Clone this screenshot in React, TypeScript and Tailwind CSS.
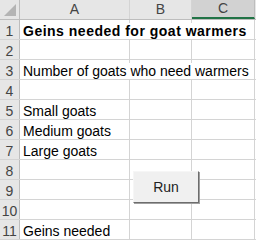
const rows: { n: number; text?: string; bold?: boolean }[] = [
  { n: 1, text: 'Geins needed for goat warmers', bold: true },
  { n: 2 },
  { n: 3, text: 'Number of goats who need warmers' },
  { n: 4 },
  { n: 5, text: 'Small goats' },
  { n: 6, text: 'Medium goats' },
  { n: 7, text: 'Large goats' },
  { n: 8 },
  { n: 9 },
  { n: 10 },
  { n: 11, text: 'Geins needed' },
];

function Corner() {
  return (
    <div className="relative h-full w-[20px] shrink-0 border-r border-[#bdbdbd] bg-[#e6e6e6]">
      <svg className="absolute bottom-[3px] right-[3px]" width="12" height="12" viewBox="0 0 12 12">
        <polygon points="12,0 12,12 0,12" fill="#b4b4b4" />
      </svg>
    </div>
  );
}

export default function App() {
  return (
    <div
      className="relative h-[242px] w-[256px] overflow-hidden bg-white text-[14px] text-black"
      style={{ fontFamily: '"Liberation Sans", Arial, sans-serif' }}
    >
      {/* column headers */}
      <div className="flex h-[20px] border-b border-[#bdbdbd] text-[#444]">
        <Corner />
        <div className="flex w-[110px] shrink-0 items-center justify-center border-r border-[#d4d4d4] bg-[#e6e6e6]">A</div>
        <div className="flex w-[62px] shrink-0 items-center justify-center border-r border-[#d4d4d4] bg-[#e6e6e6]">B</div>
        <div className="flex w-[63px] shrink-0 items-center justify-center border-r border-[#bdbdbd] border-b-2 border-b-[#217346] bg-[#d2d2d2]">C</div>
        <div className="flex-1 bg-[#e6e6e6]" />
      </div>

      {rows.map((r) => (
        <div key={r.n} className="relative flex h-[20px] border-b border-[#d4d4d4]">
          <div className="flex w-[20px] shrink-0 items-end justify-center border-r border-[#bdbdbd] bg-[#e6e6e6] leading-[16px] text-[#444]">
            {r.n}
          </div>
          <div className="w-[110px] shrink-0 border-r border-[#d4d4d4]" />
          <div className="w-[62px] shrink-0 border-r border-[#d4d4d4]" />
          <div className="w-[63px] shrink-0 border-r border-[#d4d4d4]" />
          <div className="flex-1" />
          {r.text && (
            <span
              className={`absolute bottom-0 left-[21px] z-10 whitespace-nowrap bg-white pl-[2px] pr-[2px] leading-[16px] ${
                r.bold ? 'font-bold tracking-[0.5px]' : ''
              }`}
            >
              {r.text}
            </span>
          )}
        </div>
      ))}

      {/* form button */}
      <button className="absolute left-[133px] top-[171px] z-20 flex h-[32px] w-[66px] items-center justify-center border border-t-[#f6f6f6] border-l-[#f6f6f6] border-r-[#6d6d6d] border-b-[#6d6d6d] bg-[#f0f0f0] text-[14px] text-[#222] shadow-[1px_1px_0_#a0a0a0]">
        Run
      </button>
    </div>
  );
}
